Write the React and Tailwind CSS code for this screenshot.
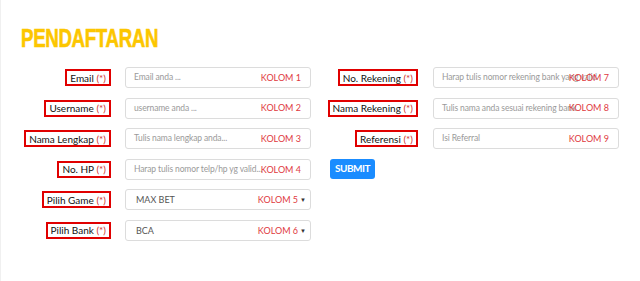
import React from "react";

const leftRows = [
  { label: "Email", placeholder: "Email anda ...", tag: "KOLOM 1" },
  { label: "Username", placeholder: "username anda ...", tag: "KOLOM 2" },
  { label: "Nama Lengkap", placeholder: "Tulis nama lengkap anda...", tag: "KOLOM 3" },
  { label: "No. HP", placeholder: "Harap tulis nomor telp/hp yg valid...", tag: "KOLOM 4" },
  { label: "Pilih Game", value: "MAX BET", tag: "KOLOM 5", select: true },
  { label: "Pilih Bank", value: "BCA", tag: "KOLOM 6", select: true },
];

const rightRows = [
  { label: "No. Rekening", placeholder: "Harap tulis nomor rekening bank yang valid", tag: "KOLOM 7" },
  { label: "Nama Rekening", placeholder: "Tulis nama anda sesuai rekening bank", tag: "KOLOM 8" },
  { label: "Referensi", placeholder: "Isi Referral", tag: "KOLOM 9" },
];

const Field = ({ row, labelWidth, gap }) => (
  <div className="flex items-center h-[21px]">
    <div className={`flex justify-end shrink-0 ${labelWidth}`}>
      <span className="border-2 border-[#e00000] px-[3px] h-[17px] flex items-center text-[10px] leading-none text-[#111] whitespace-nowrap">
        {row.label}&nbsp;<span className="text-[#d0312d]">(*)</span>
      </span>
    </div>
    <div
      className={`relative w-[186px] h-[21px] shrink-0 rounded-[3px] border border-[#dcdcdc] bg-white overflow-hidden flex items-center ${gap}`}
    >
      {row.select ? (
        <span className="pl-[10px] text-[9px] text-[#555]">{row.value}</span>
      ) : (
        <span className="pl-[8px] pr-[9px] text-[8.5px] tracking-[-0.12px] text-[#9a9a9a] whitespace-nowrap overflow-hidden">
          {row.placeholder}
        </span>
      )}
      <span
        className={`absolute inset-y-0 flex items-center text-[9px] text-[#e0393e] ${
          row.select ? "right-[4px]" : "right-[9px]"
        }`}
      >
        {row.tag}
        {row.select && <span className="ml-[2px] text-[6px] text-[#333]">▼</span>}
      </span>
    </div>
  </div>
);

export default function App() {
  return (
    <div
      className="w-[640px] h-[281px] bg-white border-l border-[#f0f0f0] pl-[20px] pt-[25px]"
      style={{ fontFamily: "Lato, 'Open Sans', sans-serif" }}
    >
      <h1
        className="text-[26px] font-bold leading-none text-[#fcc600] tracking-[-0.5px] origin-left scale-x-[0.72] [-webkit-text-stroke:0.6px_#fcc600]"
        style={{ fontFamily: "'Liberation Sans Narrow', 'Liberation Sans', sans-serif" }}
      >
        PENDAFTARAN
      </h1>
      <div className="mt-[16px] flex">
        <div className="flex flex-col gap-[9.6px]">
          {leftRows.map((row) => (
            <Field key={row.tag} row={row} labelWidth="w-[90px]" gap="ml-[14px]" />
          ))}
        </div>
        <div className="ml-[19px] flex flex-col gap-[9.6px]">
          {rightRows.map((row) => (
            <Field key={row.tag} row={row} labelWidth="w-[88px]" gap="ml-[15px]" />
          ))}
          <button className="w-[45px] h-[20px] rounded-[3px] bg-[#1a8cff] text-white text-[10px] font-bold tracking-[-0.5px]">
            SUBMIT
          </button>
        </div>
      </div>
    </div>
  );
}
